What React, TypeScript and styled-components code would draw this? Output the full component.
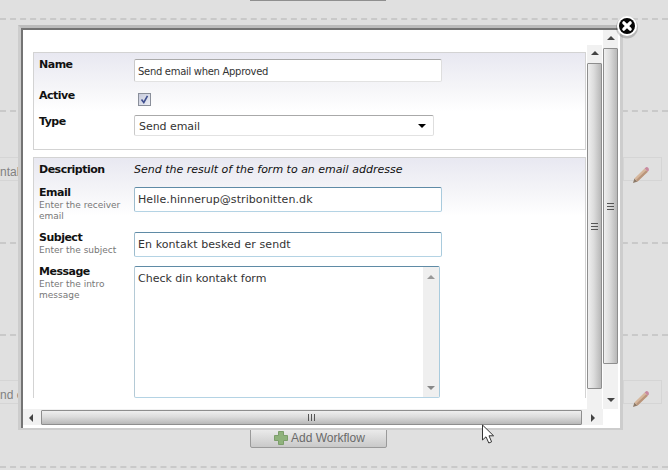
import React from "react";
import styled, { createGlobalStyle } from "styled-components";

const GlobalStyle = createGlobalStyle`
  html, body {
    margin: 0;
    padding: 0;
    background: #e0e0e0;
    overflow: hidden;
  }
  * {
    box-sizing: border-box;
  }
`;

const uiFont = `"DejaVu Sans", Verdana, sans-serif`;

const Page = styled.div`
  position: relative;
  width: 668px;
  height: 470px;
  overflow: hidden;
  background: #e0e0e0;
  font-family: ${uiFont};
`;

const Group = styled.section<{ $height: number; $top?: number }>`
  display: flex;
  flex-direction: column;
  height: ${(p) => p.$height}px;
  padding-top: ${(p) => p.$top ?? 0}px;
  border-bottom: 2px dashed #c9c9c9;
`;

const TopEdge = styled.div`
  width: 136px;
  height: 1px;
  margin-left: 250px;
  background: #8f8f8f;
`;

const WorkflowRow = styled.div`
  display: flex;
  flex: none;
  width: 662px;
  height: 24px;
  line-height: 29px;
  border-top: 1px solid #d5d5d5;
  border-bottom: 1px solid #d5d5d5;
  font-family: "Liberation Sans", Arial, sans-serif;
  font-size: 12px;
  color: #808080;
  white-space: nowrap;
`;

const ActionCell = styled.div<{ $top: number }>`
  flex: none;
  width: 39px;
  height: 100%;
  margin-left: auto;
  padding: ${(p) => p.$top}px 0 0 8px;
  border-left: 1px solid #d5d5d5;
  border-right: 1px solid #d5d5d5;
`;

const AddButton = styled.button`
  display: flex;
  align-items: center;
  gap: 3px;
  flex: none;
  width: 137px;
  height: 20px;
  margin: 24px 0 0 250px;
  padding: 0 0 0 23px;
  border: 1px solid #9a9a9a;
  border-radius: 2px;
  background: linear-gradient(#ececec, #c9c9c9);
  font-family: "Liberation Sans", Arial, sans-serif;
  font-size: 12px;
  color: #6a6a6a;
`;

const Modal = styled.div`
  position: absolute;
  left: 18px;
  top: 25px;
  width: 605px;
  height: 405px;
  border: solid #cdcdcd;
  border-width: 3px 3px 2px 3px;
  border-top-color: #bcbcbc;
`;

const Frame = styled.div`
  display: flex;
  flex-direction: column;
  width: 100%;
  height: 100%;
  padding: 0 2px 3px 0;
  background: #fff;
  border-top: 2px solid #747474;
  border-left: 2px solid #747474;
`;

const FrameMain = styled.div`
  display: flex;
  flex: 1;
  min-height: 0;
`;

const Content = styled.div`
  display: flex;
  flex-direction: column;
  gap: 7px;
  width: 564px;
  height: 100%;
  padding: 22px 1px 0 10px;
  overflow: hidden;
`;

const Section = styled.div<{ $open?: boolean }>`
  display: flex;
  flex-direction: column;
  flex: none;
  padding: ${(p) => (p.$open ? "0 0 0 5px" : "6px 0 13px 5px")};
  border: 1px solid #d3d3d3;
  border-bottom-width: ${(p) => (p.$open ? 0 : 1)}px;
  background: linear-gradient(#e8e8f1, #f5f5f8 34px, #fff 58px);
`;

const Row = styled.div<{ $height: number; $gap?: number }>`
  display: flex;
  height: ${(p) => p.$height}px;
  margin-bottom: ${(p) => p.$gap ?? 0}px;
`;

const LabelColumn = styled.div<{ $top?: number }>`
  display: flex;
  flex-direction: column;
  flex: none;
  width: 95px;
  padding-top: ${(p) => p.$top ?? 0}px;
`;

const Label = styled.label`
  font-size: 11px;
  font-weight: bold;
  line-height: 12px;
  letter-spacing: -0.5px;
  color: #111;
`;

const IntroLabel = styled(Label).attrs({ as: "span" })`
  line-height: 24px;
`;

const Hint = styled.span`
  max-width: 90px;
  margin-top: 1px;
  font-size: 9px;
  line-height: 11px;
  color: #777;
`;

const Intro = styled.em`
  font-size: 11px;
  line-height: 24px;
  color: #111;
`;

const TextField = styled.input<{ $active?: boolean }>`
  width: 308px;
  height: 100%;
  padding: ${(p) => (p.$active ? "0 0 0 3px" : "1px 0 0 3px")};
  border: 1px solid;
  border-color: ${(p) =>
    p.$active ? "#5f8ba6 #a9cbdd #b4d3e4 #9dbccd" : "#a9a9a9 #dedede #e2e2e2 #c9c9c9"};
  border-radius: 2px;
  outline: none;
  background: #fff;
  font-family: ${uiFont};
  font-size: ${(p) => (p.$active ? 11 : 10)}px;
  letter-spacing: ${(p) => (p.$active ? 0.08 : -0.3)}px;
  color: #333;
`;

const SelectBox = styled.div`
  display: flex;
  align-items: center;
  justify-content: space-between;
  width: 300px;
  height: 21px;
  padding: 1px 7px 0 4px;
  border: 1px solid;
  border-color: #a9a9a9 #dedede #e2e2e2 #c9c9c9;
  border-radius: 2px;
  background: #fff;
  font-size: 11px;
  letter-spacing: -0.05px;
  color: #333;
`;

const CheckBox = styled.div`
  display: flex;
  align-items: center;
  justify-content: center;
  width: 13px;
  height: 13px;
  margin: 5px 0 0 4px;
  border: 1px solid #8a8f9a;
  background: linear-gradient(135deg, #c6cadb, #eceef5);
`;

const MessageBox = styled.div`
  display: flex;
  justify-content: space-between;
  width: 306px;
  height: 132px;
  border: 1px solid;
  border-color: #5f8ba6 #a9cbdd #b4d3e4 #b4cad6;
  border-radius: 2px;
  background: #fff;
`;

const MessageText = styled.div`
  padding: 5px 0 0 3px;
  font-size: 11px;
  line-height: 13px;
  color: #333;
`;

const MessageTrack = styled.div`
  display: flex;
  flex-direction: column;
  align-items: center;
  justify-content: space-between;
  width: 16px;
  padding: 7px 0 5px;
  background: #efefef;
`;

const VTrack = styled.div<{ $top?: number; $right?: number }>`
  display: flex;
  flex-direction: column;
  flex: none;
  width: 15px;
  margin-top: ${(p) => p.$top ?? 0}px;
  margin-right: ${(p) => p.$right ?? 0}px;
  background: #f1f1f1;
`;

const ArrowCell = styled.div<{ $size: number; $horizontal?: boolean }>`
  display: flex;
  align-items: center;
  justify-content: center;
  flex: none;
  ${(p) => (p.$horizontal ? `width: ${p.$size}px;` : `height: ${p.$size}px;`)}
`;

const VThumb = styled.div<{ $height: number }>`
  display: flex;
  align-items: center;
  justify-content: center;
  flex: none;
  height: ${(p) => p.$height}px;
  border: 1px solid #8e8e8e;
  border-radius: 1px;
  background: linear-gradient(90deg, #efefef, #dcdcdc 45%, #b8b8b8);
`;

const HTrack = styled.div`
  display: flex;
  flex: none;
  width: 580px;
  height: 16px;
  padding-top: 1px;
  background: #f1f1f1;
`;

const HThumb = styled.div`
  display: flex;
  align-items: center;
  justify-content: center;
  width: 541px;
  border: 1px solid #8e8e8e;
  border-radius: 1px;
  background: linear-gradient(#efefef, #dcdcdc 45%, #b8b8b8);
`;

const Grip = styled.span<{ $horizontal?: boolean }>`
  display: block;
  width: 7px;
  height: 7px;
  background: repeating-linear-gradient(
    ${(p) => (p.$horizontal ? "90deg" : "180deg")},
    #555 0 1px,
    transparent 1px 3px
  );
`;

const Filler = styled.div`
  flex: 1;
`;

const Overlay = styled.svg<{ $left: number; $top: number }>`
  position: absolute;
  left: ${(p) => p.$left}px;
  top: ${(p) => p.$top}px;
`;

type Direction = "up" | "down" | "left" | "right";

const arrowPoints: Record<Direction, string> = {
  up: "0,5 4,1 8,5",
  down: "0,2 8,2 4,6",
  left: "5,0 5,8 1,4",
  right: "2,0 2,8 6,4",
};

const Arrow = ({ dir, color = "#444" }: { dir: Direction; color?: string }) => (
  <svg width="8" height="8" viewBox="0 0 8 8">
    <polygon points={arrowPoints[dir]} fill={color} />
  </svg>
);

const Pencil = () => (
  <svg width="18" height="18" viewBox="0 0 18 18">
    <path d="M1 17 L2.4 12.4 L5.6 15.6 Z" fill="#8d7a68" />
    <path d="M2.4 12.4 L12.6 2.6 L15.8 5.8 L5.6 15.6 Z" fill="#d6b79c" />
    <path d="M4 14 L14.2 4.2 L15.8 5.8 L5.6 15.6 Z" fill="#b9957b" />
    <path d="M12.6 2.6 L14 1.2 Q15 .6 16.2 1.8 Q17.4 3 16.8 4.2 L15.8 5.8 Z" fill="#c98aa0" />
  </svg>
);

const PlusIcon = () => (
  <svg width="14" height="14" viewBox="0 0 14 14">
    <path
      d="M4.5 .5 H9.5 V4.5 H13.5 V9.5 H9.5 V13.5 H4.5 V9.5 H.5 V4.5 H4.5 Z"
      fill="#8fb27c"
      stroke="#7c9e6b"
    />
  </svg>
);

const App = () => (
  <Page>
    <GlobalStyle />
    <Group $height={20}>
      <TopEdge />
    </Group>
    <Group $height={92} />
    <Group $height={132} $top={45}>
      <WorkflowRow>
        ntal
        <ActionCell $top={8}>
          <Pencil />
        </ActionCell>
      </WorkflowRow>
    </Group>
    <Group $height={92} />
    <Group $height={132} $top={44}>
      <WorkflowRow>
        nd e
        <ActionCell $top={9}>
          <Pencil />
        </ActionCell>
      </WorkflowRow>
      <AddButton>
        <PlusIcon />
        Add Workflow
      </AddButton>
    </Group>

    <Modal>
      <Frame>
        <FrameMain>
          <Content>
            <Section>
              <Row $height={23} $gap={6}>
                <LabelColumn>
                  <Label>Name</Label>
                </LabelColumn>
                <TextField readOnly value="Send email when Approved" />
              </Row>
              <Row $height={21} $gap={6}>
                <LabelColumn $top={2}>
                  <Label>Active</Label>
                </LabelColumn>
                <CheckBox>
                  <svg width="9" height="9" viewBox="0 0 9 9">
                    <path d="M1.5 4.5 L3.8 7.5 L7.5 .8" fill="none" stroke="#3f4f8f" strokeWidth="1.6" />
                  </svg>
                </CheckBox>
              </Row>
              <Row $height={21}>
                <LabelColumn $top={1}>
                  <Label>Type</Label>
                </LabelColumn>
                <SelectBox>
                  Send email
                  <Arrow dir="down" color="#000" />
                </SelectBox>
              </Row>
            </Section>
            <Section $open>
              <Row $height={29}>
                <LabelColumn>
                  <IntroLabel>Description</IntroLabel>
                </LabelColumn>
                <Intro>Send the result of the form to an email addresse</Intro>
              </Row>
              <Row $height={25} $gap={20}>
                <LabelColumn>
                  <Label>Email</Label>
                  <Hint>Enter the receiver email</Hint>
                </LabelColumn>
                <TextField $active readOnly value="Helle.hinnerup@stribonitten.dk" />
              </Row>
              <Row $height={25} $gap={9}>
                <LabelColumn>
                  <Label>Subject</Label>
                  <Hint>Enter the subject</Hint>
                </LabelColumn>
                <TextField $active readOnly value="En kontakt besked er sendt" />
              </Row>
              <Row $height={132}>
                <LabelColumn>
                  <Label>Message</Label>
                  <Hint>Enter the intro message</Hint>
                </LabelColumn>
                <MessageBox>
                  <MessageText>Check din kontakt form</MessageText>
                  <MessageTrack>
                    <Arrow dir="up" color="#999" />
                    <Arrow dir="down" color="#888" />
                  </MessageTrack>
                </MessageBox>
              </Row>
            </Section>
          </Content>
          <VTrack $top={15} $right={1}>
            <ArrowCell $size={18}>
              <Arrow dir="up" />
            </ArrowCell>
            <VThumb $height={326}>
              <Grip />
            </VThumb>
          </VTrack>
          <VTrack>
            <ArrowCell $size={18}>
              <Arrow dir="up" />
            </ArrowCell>
            <VThumb $height={316}>
              <Grip />
            </VThumb>
            <Filler />
            <ArrowCell $size={18}>
              <Arrow dir="down" />
            </ArrowCell>
          </VTrack>
        </FrameMain>
        <HTrack>
          <ArrowCell $size={18} $horizontal>
            <Arrow dir="left" />
          </ArrowCell>
          <HThumb>
            <Grip $horizontal />
          </HThumb>
          <Filler />
          <ArrowCell $size={21} $horizontal>
            <Arrow dir="right" />
          </ArrowCell>
        </HTrack>
      </Frame>
    </Modal>

    {/* close button sits over the modal corner */}
    <Overlay $left={615} $top={15} width="24" height="25" viewBox="0 0 24 25">
      <circle cx="12" cy="12.5" r="11" fill="#000" opacity=".18" />
      <circle cx="12" cy="11" r="10" fill="#fff" />
      <circle cx="12" cy="11" r="8" fill="#050505" />
      <path d="M8.8 7.8 L15.2 14.2 M15.2 7.8 L8.8 14.2" stroke="#fff" strokeWidth="3.2" strokeLinecap="round" />
    </Overlay>

    {/* mouse pointer */}
    <Overlay $left={481} $top={424} width="15" height="21" viewBox="0 0 15 21">
      <path
        d="M1.5 1 V16 L5 12.8 L7.8 19 L10.6 17.8 L8 11.8 H12.6 Z"
        fill="#fff"
        stroke="#333"
        strokeWidth="1"
        strokeLinejoin="round"
      />
    </Overlay>
  </Page>
);

export default App;
